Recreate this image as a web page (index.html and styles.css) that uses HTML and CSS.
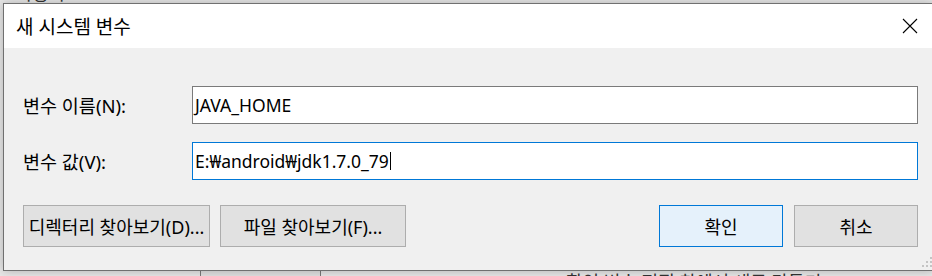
FILE: index.html
```html
<!DOCTYPE html>
<html lang="ko">
<head>
    <meta charset="UTF-8">
    <title>새 시스템 변수</title>
    <link rel="stylesheet" href="styles.css">
</head>
<body>

    <div class="desktop">
        <!-- 뒤쪽 창의 일부 -->
        <div class="back-text back-top">사용자</div>
        <div class="back-button"></div>
        <div class="back-text back-bottom">확인 변수 편집 창에서 새로 만들기</div>

        <div class="dialog">
            <div class="titlebar">
                <div class="title">새 시스템 변수</div>
                <div class="close">
                    <svg width="16" height="16" viewBox="0 0 16 16">
                        <path d="M1 1 L15 15 M15 1 L1 15" stroke="#000" stroke-width="1.1" fill="none"/>
                    </svg>
                </div>
            </div>

            <div class="content">
                <div class="form">
                    <label class="label">변수 이름(N):</label>
                    <div class="field">JAVA_HOME</div>
                    <label class="label">변수 값(V):</label>
                    <div class="field focused">E:₩android₩jdk1.7.0_79<span class="caret"></span></div>
                </div>

                <div class="buttons">
                    <button class="btn btn-dir">디렉터리 찾아보기(D)...</button>
                    <button class="btn btn-file">파일 찾아보기(F)...</button>
                    <button class="btn btn-ok">확인</button>
                    <button class="btn btn-cancel">취소</button>
                </div>
            </div>

            <svg class="grip" width="11" height="11" viewBox="0 0 11 11">
                <rect x="8" y="0" width="2" height="2" fill="#c4c4c4"/>
                <rect x="4" y="4" width="2" height="2" fill="#c4c4c4"/>
                <rect x="8" y="4" width="2" height="2" fill="#c4c4c4"/>
                <rect x="0" y="8" width="2" height="2" fill="#c4c4c4"/>
                <rect x="4" y="8" width="2" height="2" fill="#c4c4c4"/>
                <rect x="8" y="8" width="2" height="2" fill="#c4c4c4"/>
            </svg>
        </div>
    </div>

</body>
</html>
```

FILE: styles.css
```css
* {
    box-sizing: border-box;
}
body {
    margin: 0;
    background-color: #e8e8e8;
    font-family: "Noto Sans", "Noto Sans CJK KR", sans-serif;
    color: #000;
}
.desktop {
    position: relative;
    width: 932px;
    height: 276px;
    overflow: hidden;
}
.back-text {
    position: absolute;
    font-size: 18px;
    color: #333;
    white-space: nowrap;
}
.back-top {
    left: 16px;
    top: -21px;
}
.back-bottom {
    left: 566px;
    top: 268px;
}
.back-button {
    position: absolute;
    left: 200px;
    top: 270px;
    width: 121px;
    height: 20px;
    border: 1px solid #7a7a7a;
    background-color: #e1e1e1;
}
.dialog {
    position: absolute;
    left: 3px;
    top: 3px;
    width: 931px;
    height: 268px;
    border: 1px solid #707070;
    background-color: #f0f0f0;
    box-shadow: 0 0 10px rgba(0, 0, 0, 0.25);
}
.titlebar {
    display: flex;
    align-items: center;
    height: 44px;
    background-color: #fff;
}
.title {
    flex: 1;
    padding-left: 12px;
    font-size: 19px;
}
.close {
    width: 46px;
    height: 44px;
    display: flex;
    align-items: center;
    justify-content: center;
}
.content {
    padding: 38px 0 0 19px;
}
.form {
    display: grid;
    grid-template-columns: 169px 726px;
    grid-auto-rows: 38px;
    row-gap: 18px;
    align-items: center;
}
.label {
    font-size: 18.5px;
}
.field {
    height: 38px;
    display: flex;
    align-items: center;
    padding-left: 2px;
    background-color: #fff;
    border: 1px solid #7a7a7a;
    font-size: 17.5px;
    white-space: nowrap;
}
.field.focused {
    border-color: #0078d7;
}
.caret {
    display: inline-block;
    width: 1px;
    height: 18px;
    margin-left: 1px;
    background-color: #000;
}
.buttons {
    display: flex;
    margin-top: 25px;
}
.btn {
    height: 42px;
    padding: 0;
    font-family: inherit;
    font-size: 18px;
    color: #000;
    background-color: #e1e1e1;
    border: 1px solid #adadad;
    white-space: nowrap;
}
.btn-dir {
    width: 187px;
}
.btn-file {
    width: 186px;
    margin-left: 10px;
}
.btn-ok {
    width: 124px;
    margin-left: auto;
    background-color: #e5f1fb;
    border-color: #0078d7;
}
.btn-cancel {
    width: 124px;
    margin-left: 11px;
    margin-right: 15px;
}
.grip {
    position: absolute;
    right: 0px;
    bottom: 2px;
}
```
